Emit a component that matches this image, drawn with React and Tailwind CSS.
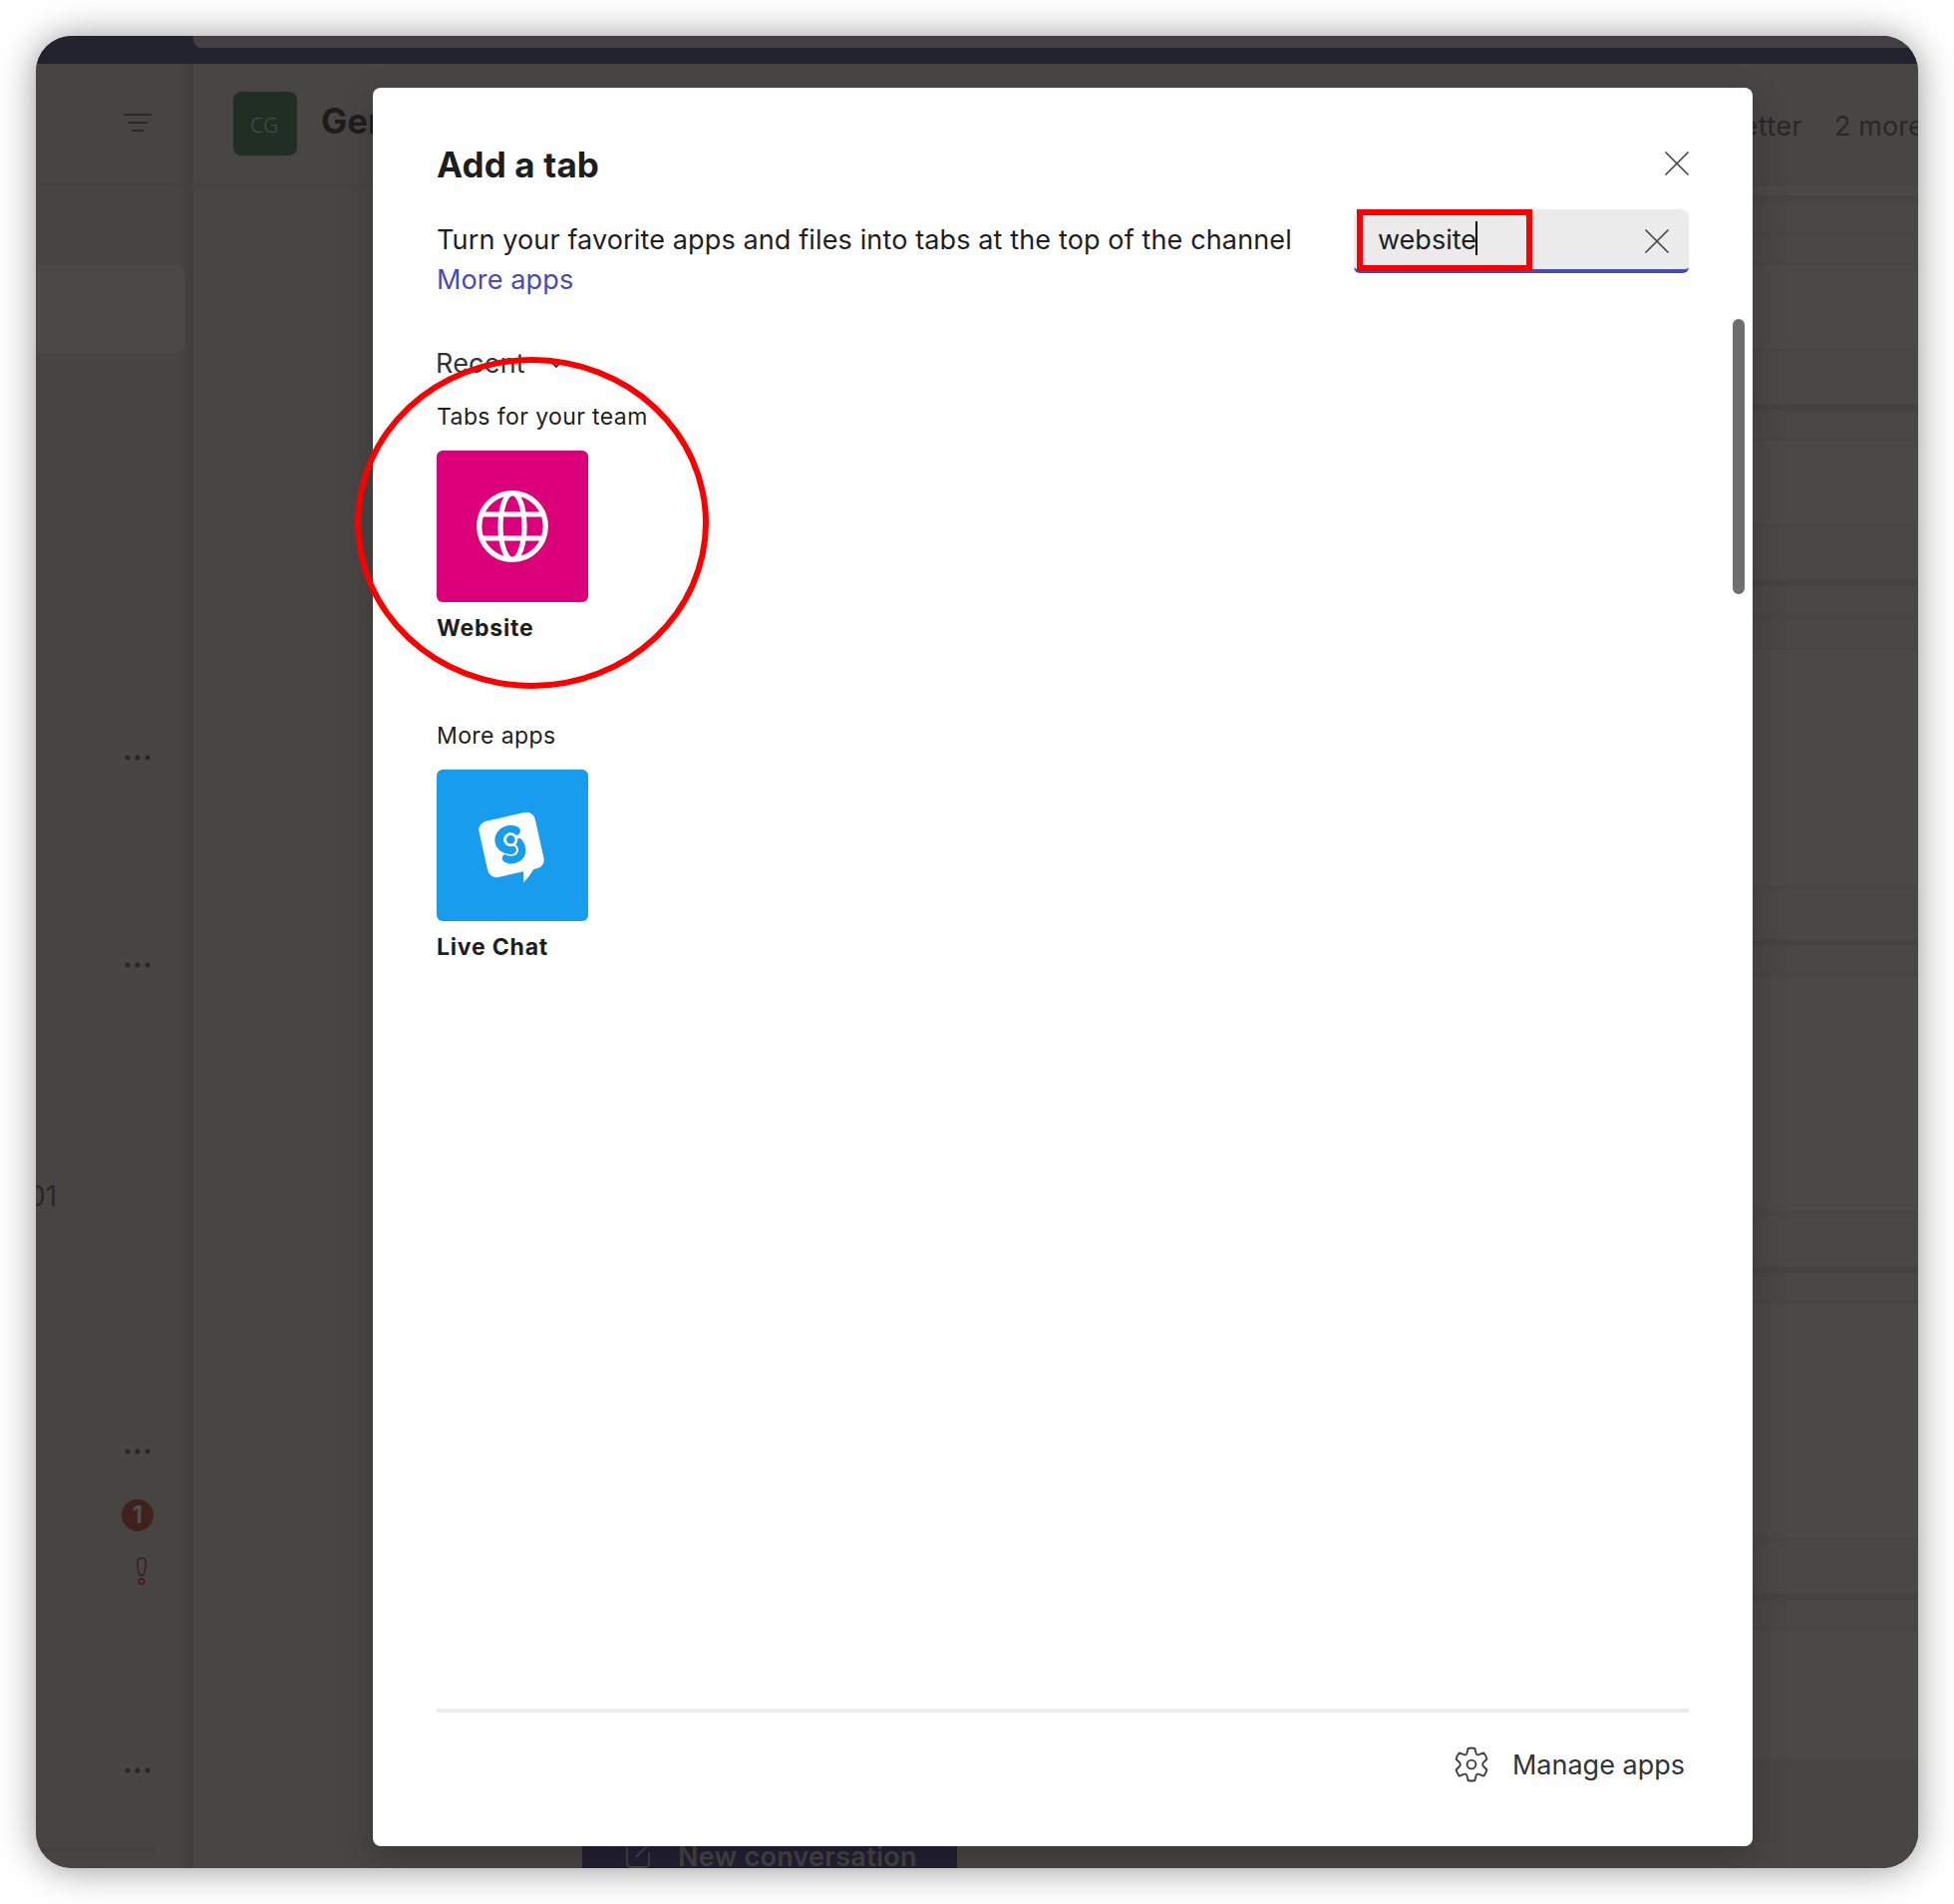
const FEED = [
  [10, "bg-[#4a4946]"],
  [6, "bg-[#454441]"],
  [30, "bg-[#484744]"],
  [2, "bg-[#464542]"],
  [30, "bg-[#484744]"],
  [2, "bg-[#464542]"],
  [84, "bg-[#4a4946]"],
  [2, "bg-[#464542]"],
  [54, "bg-[#494845]"],
  [5, "bg-[#444340]"],
  [29, "bg-[#484744]"],
  [2, "bg-[#464542]"],
  [84, "bg-[#4a4946]"],
  [2, "bg-[#464542]"],
  [54, "bg-[#494845]"],
  [6, "bg-[#444340]"],
  [30, "bg-[#484744]"],
  [2, "bg-[#464542]"],
  [30, "bg-[#484744]"],
  [2, "bg-[#464542]"],
  [236, "bg-[#4a4946]"],
  [2, "bg-[#464542]"],
  [53, "bg-[#494845]"],
  [5, "bg-[#444340]"],
  [29, "bg-[#484744]"],
  [2, "bg-[#464542]"],
  [236, "bg-[#4a4946]"],
  [2, "bg-[#464542]"],
  [54, "bg-[#494845]"],
  [6, "bg-[#444340]"],
  [28, "bg-[#484744]"],
  [2, "bg-[#464542]"],
  [236, "bg-[#4a4946]"],
  [2, "bg-[#464542]"],
  [54, "bg-[#494845]"],
  [6, "bg-[#444340]"],
  [28, "bg-[#484744]"],
  [2, "bg-[#464542]"],
  [129, "bg-[#4a4946]"],
  [110, "bg-[#484644]"],
];

function Dots({ className }) {
  return (
    <svg className={`h-6 w-8 shrink-0 ${className}`} viewBox="-16 -12 32 24" fill="#282826">
      <circle cx="-10" r="2.5" />
      <circle r="2.5" />
      <circle cx="10" r="2.5" />
    </svg>
  );
}

function Cross() {
  return (
    <svg className="block size-6" viewBox="0 0 24 24" stroke="#484644" strokeWidth="1.7" strokeLinecap="round">
      <path d="M1 1l22 22M23 1L1 23" />
    </svg>
  );
}

function Sidebar() {
  return (
    <aside className="flex w-[158px] shrink-0 flex-col bg-[linear-gradient(to_right,#464542_144px,#42403d_153px)]">
      <div className="flex h-[120px] shrink-0 justify-end pt-[47px] pr-10">
        <svg className="h-6 w-8" viewBox="0 0 32 24" stroke="#282826" strokeWidth="2" strokeLinecap="round">
          <path d="M3 4h26M7 12h18M11 20h10" />
        </svg>
      </div>
      <div className="h-0.5 shrink-0 bg-[#43423f]" />
      <div className="mt-20 mr-[9px] h-[88px] shrink-0 rounded-r-lg bg-[#4a4946]" />
      <div className="flex flex-col items-end pr-10">
        <Dots className="mt-[394px]" />
        <Dots className="mt-[184px]" />
        <div className="mt-[200px] h-10 w-[118px] self-start">
          <span className="-ml-[8px] text-[28px] leading-10 text-[#282826]">01</span>
        </div>
        <Dots className="mt-[224px]" />
        <div className="mt-9 size-8 rounded-full bg-[#3f221d] text-center text-[24px] leading-8 font-bold text-[#504f4d]">1</div>
        <svg className="mt-6 mr-1 h-8 w-4" viewBox="0 0 16 32" fill="none" stroke="#45191f" strokeWidth="1.6">
          <path d="M8 3C5.2 3 3.500 4.700 3.700 7.500C4 12 5.200 20.800 8 20.800S12 12 12.300 7.500C12.500 4.700 10.800 3 8 3Z" />
          <circle cx="8" cy="26.600" r="2.700" />
        </svg>
        <Dots className="mt-[172px]" />
      </div>
      <div className="mt-[66px] mr-10 h-1 shrink-0 bg-[#42413e]" />
    </aside>
  );
}

function Channel() {
  return (
    <main className="flex min-w-0 flex-1 flex-col bg-[#484644]">
      <header className="flex h-[122px] shrink-0 border-b-2 border-[#454441] pt-7 pl-10">
        <div className="flex size-16 shrink-0 items-center justify-center rounded-lg bg-[#212e23] pt-1 pr-0.5 font-['Open_Sans'] text-[21px] font-light text-[#4d524d]">
          CG
        </div>
        <h1 className="ml-6 h-10 w-[180px] text-[35px] leading-[58px] font-bold text-[#1e1d1b]">General</h1>
        <div className="ml-auto flex w-[181px] shrink-0 text-[27px] leading-[69px] whitespace-nowrap text-[#282826]">
          <span className="w-[65px] shrink-0 text-right tracking-[0.4px]">etter</span>
          <span className="ml-8 shrink-0 tracking-[0.1px]">2 more</span>
        </div>
      </header>
      <div className="flex min-h-0 flex-1">
        <div className="ml-[390px] flex w-[376px] shrink-0 flex-col justify-end">
          <div className="flex h-12 bg-[#232033] pl-11 text-[#454442]">
            <svg className="mt-[22px] h-[26px] w-6 shrink-0" viewBox="0 0 24 26" fill="none" stroke="currentColor" strokeWidth="1.8">
              <path d="M12 2H5Q1 2 1 6v15q0 4 4 4h14q4 0 4-4v-10M10.500 14.500L22 3" strokeLinecap="round" />
            </svg>
            <span className="ml-7 text-[27px] leading-[74px] font-semibold tracking-[0.25px] whitespace-nowrap">New conversation</span>
          </div>
        </div>
        <div className="ml-[200px] flex min-w-0 flex-1 flex-col">
          {FEED.map(([height, tone], i) => (
            <div key={i} className={`shrink-0 ${tone}`} style={{ height }} />
          ))}
        </div>
      </div>
    </main>
  );
}

function Globe() {
  return (
    <svg className="size-[76px]" viewBox="-38 -38 76 76" fill="none" stroke="#fff" strokeWidth="5.2">
      <circle r="33.300" />
      <ellipse rx="12" ry="33.300" />
      <path d="M-31-12H31M-31 12H31" />
    </svg>
  );
}

function ChatLogo() {
  return (
    <svg className="size-[152px]" viewBox="0 0 152 152" fill="none" strokeLinecap="round">
      <g fill="#fff">
        <rect x="46.200" y="46.700" width="57.600" height="57.600" rx="9" transform="rotate(-12.500 75 75.500)" />
        <path d="M87 100v13.500q6-6 11-14.500z" />
      </g>
      <path d="M70 89C76 92 85.500 89 85 80Q84.500 76 82 73" stroke="#189ced" strokeWidth="8.600" />
      <path d="M70 79q3 2 6 1.600" stroke="#fff" strokeWidth="12" />
      <path d="M79.500 61.500C72 58 62.700 63 62.700 71C63 77 69 81 75.500 80.500" stroke="#189ced" strokeWidth="8.800" />
      <circle cx="74.300" cy="70.300" r="7" fill="#fff" />
      <circle cx="74.300" cy="70.300" r="4.300" fill="#189ced" />
    </svg>
  );
}

function AppTile({ heading, name, tone, className, children }) {
  return (
    <section className={`flex flex-col ${className}`}>
      <h3 className="text-[23px] leading-8 tracking-[0.4px] whitespace-nowrap">{heading}</h3>
      <div className={`mt-[18px] flex size-[152px] items-center justify-center rounded-md ${tone}`}>{children}</div>
      <p className="mt-[10px] text-[23px] leading-8 font-bold tracking-[0.8px]">{name}</p>
    </section>
  );
}

function Dialog() {
  return (
    <div className="absolute top-[52px] left-[338px] flex h-[1764px] w-[1384px] flex-col rounded-lg bg-white px-16 text-[#1e1e1e] shadow-[0_14px_36px_rgba(0,0,0,0.2)]">
      <div className="flex h-[122px] shrink-0 justify-between pt-[53px]">
        <h2 className="text-[35px] leading-[48px] font-bold tracking-[0.15px]">Add a tab</h2>
        <div className="pt-[11px]">
          <Cross />
        </div>
      </div>
      <div className="flex shrink-0 justify-between">
        <p className="pt-[11px] text-[27px] leading-10 tracking-[0.13px] whitespace-nowrap">
          Turn your favorite apps and files into tabs at the top of the channel
          <br />
          <a className="text-[#4a48bd]">More apps</a>
        </p>
        <div className="flex h-16 w-[336px] overflow-hidden rounded-lg rounded-b-md border-b-4 border-[#4a48bd] bg-[#ebebeb] pl-6">
          <span className="pt-[11px] text-[27px] leading-10">website</span>
          <span className="-ml-px mt-3 h-[34px] w-0.5 bg-black" />
          <span className="mt-5 mr-5 ml-auto">
            <Cross />
          </span>
        </div>
      </div>
      <div className="mt-[44px] flex h-10 shrink-0 items-center text-[27px] leading-10 text-[#333]">
        <span className="-ml-px tracking-[0.2px]">Recent</span>
        <svg className="ml-[23px] h-3 w-4" viewBox="0 0 16 12" fill="none" stroke="#333" strokeWidth="1.8">
          <path d="M2 3l6 6 6-6" />
        </svg>
      </div>
      <AppTile className="mt-[17px]" heading="Tabs for your team" name="Website" tone="bg-[#db007a]">
        <Globe />
      </AppTile>
      <AppTile className="mt-[76px]" heading="More apps" name="Live Chat" tone="bg-[#189ced]">
        <ChatLogo />
      </AppTile>
      <footer className="mt-auto flex h-[138px] shrink-0 justify-end border-t-4 border-[#ebebeb] pt-8 text-[27px] leading-10 text-[#333]">
        <svg className="h-10 w-10" viewBox="-20 -20 40 40" fill="none" stroke="#404040" strokeWidth="1.900" strokeLinejoin="round">
          <path d="M-3.400-16Q0-17 3.400-16L4.600-11.200Q5.300-9 7.600-9.800L12.200-11.600Q14.500-9 15.400-5.300L12-2Q10.400 0 12 2L15.400 5.300Q14.500 9 12.200 11.600L7.600 9.800Q5.300 9 4.600 11.200L3.400 16Q0 17-3.400 16L-4.600 11.200Q-5.300 9-7.600 9.800L-12.200 11.600Q-14.500 9-15.400 5.300L-12 2Q-10.400 0-12-2L-15.400-5.300Q-14.500-9-12.200-11.600L-7.600-9.800Q-5.300-9-4.600-11.200Z" />
          <circle r="4.400" />
        </svg>
        <span className="mt-px mr-1 ml-[21px]">Manage apps</span>
      </footer>
      <div className="absolute top-[232px] right-2 h-[276px] w-3 rounded-full bg-[#6e6e6e]" />
    </div>
  );
}

export default function App() {
  return (
    <div className="h-[1910px] w-[1960px] overflow-hidden bg-white p-9 font-['Inter',sans-serif]">
      <div className="relative h-[1838px] rounded-[36px] shadow-[0_1px_36px_rgba(0,0,0,0.42)]">
        <div className="relative flex h-full flex-col overflow-hidden rounded-[36px] bg-[#484644]">
          <div className="h-7 shrink-0 bg-[#23222f] pl-[158px]">
            <div className="h-3 rounded-bl-lg bg-[#434043]" />
          </div>
          <div className="flex min-h-0 flex-1">
            <Sidebar />
            <Channel />
          </div>
          <Dialog />
        </div>
        <div className="absolute top-[174px] left-[1325px] h-[62px] w-[176px] border-[6px] border-[#fc0000]" />
        <div className="absolute top-[322px] left-[320px] h-[333px] w-[355px] rounded-[50%] border-[6px] border-[#fc0000]" />
      </div>
    </div>
  );
}
